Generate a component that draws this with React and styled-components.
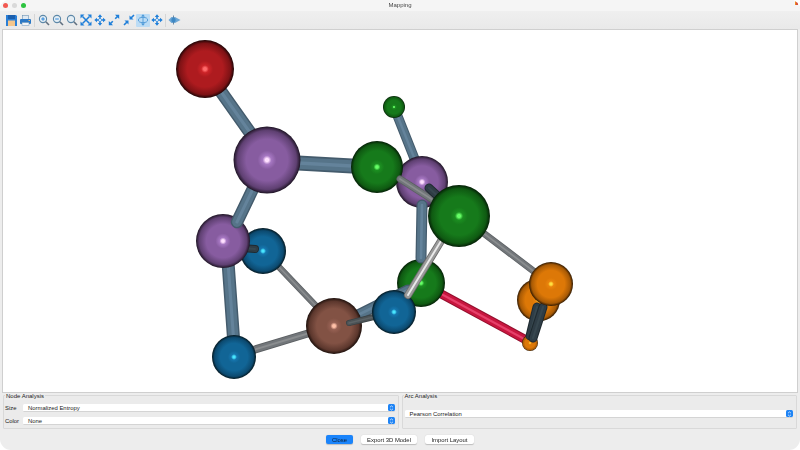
import React from "react";
import styled, { createGlobalStyle } from "styled-components";

const Global = createGlobalStyle`
  html, body { margin: 0; padding: 0; background: #fff; width: 800px; height: 450px; overflow: hidden; }
  body { font-family: "Liberation Sans", Arial, sans-serif; }
`;

const Window = styled.div`
  width: 800px; height: 450px; box-sizing: border-box;
  background: #ededed; border-radius: 9px 9px 11px 11px;
  display: flex; flex-direction: column; overflow: hidden; position: relative;
  filter: blur(0.25px);
`;
const TitleBar = styled.div`
  height: 11px; flex: none; display: flex; align-items: center; position: relative;
  padding-left: 3px; gap: 4px; background: #f5f5f5;
`;
const Light = styled.span`
  width: 5px; height: 5px; border-radius: 50%; background: ${p => p.$c};
`;
const Title = styled.div`
  position: absolute; left: 0; right: 0; top: 1px; text-align: center;
  font-size: 6px; line-height: 9px; color: #444;
`;
const Badge = styled.div`
  position: absolute; right: 2px; top: 1px; width: 3px; height: 4px;
  background: linear-gradient(90deg, #ef8a1e 50%, #d9503a 50%);
`;
const Toolbar = styled.div`
  height: 18px; flex: none; display: flex; align-items: center; padding-left: 4px;
  background: linear-gradient(#efefef, #e9e9e9);
`;
const ToolBtn = styled.div`
  width: 14.1px; height: 13px; flex: none; display: flex; align-items: center; justify-content: center;
  background: ${p => (p.$active ? "#bcdcf5" : "transparent")}; border-radius: 1px;
`;
const Sep = styled.div`
  width: 1px; height: 13px; flex: none; margin: 0 ${p => p.$m}px; background: #d6d6d6;
`;
const Stage = styled.svg`
  display: block; flex: none; width: 794px; height: 362px; margin: 1px 3px 0;
  background: #fff; outline: 1px solid #cfcfcf;
`;
const Panels = styled.div`
  flex: none; display: flex; gap: 3px; margin: 3px 3px 0; height: 34px;
`;
const Group = styled.div`
  flex: 1 1 0; box-sizing: border-box; position: relative; border: 1px solid #d9d9d9;
  background: #ebebeb; border-radius: 1px; padding: 8px 3px 0 1px;
  display: flex; flex-direction: column; gap: 5px;
  justify-content: ${p => (p.$center ? "center" : "flex-start")};
  ${p => p.$center && "padding-top: 4px;"}
`;
const GroupTitle = styled.div`
  position: absolute; left: 1px; top: -3px; padding: 0 1px; font-size: 6px; line-height: 7px;
  color: #222; background: #ededed;
`;
const FieldRow = styled.div`
  display: flex; align-items: center; height: 8px; font-size: 5.9px; color: #222;
`;
const FieldLabel = styled.div`
  width: 18px; flex: none; white-space: nowrap;
`;
const Combo = styled.div`
  flex: 1; height: 8px; box-sizing: border-box; background: #fff; border-radius: 1.5px;
  border-bottom: 1px solid #d4d4d4; padding-left: 5px; margin-left: ${p => p.$ml || 0}px;
  display: flex; align-items: center; justify-content: space-between; font-size: 5.9px; color: #222;
`;
const Stepper = styled.div`
  width: 7px; height: 7.5px; flex: none; border-radius: 1.5px; background: #1f84f5;
  display: flex; align-items: center; justify-content: center;
`;
const Buttons = styled.div`
  flex: 1; display: flex; justify-content: center; align-items: center; gap: 8px;
`;
const Button = styled.div`
  height: 9px; width: ${p => p.$w}px; display: flex; align-items: center; justify-content: center;
  border-radius: 2px; font-size: 5.9px; background: ${p => (p.$primary ? "#1a84fb" : "#fff")};
  color: ${p => (p.$primary ? "#0c1d33" : "#222")};
  box-shadow: 0 0.5px 1px rgba(0,0,0,.2);
`;

const B = "#1f7fd9";
const Mag = ({ sign }) => (
  <svg width="12" height="12" viewBox="0 0 12 12" fill="none">
    <circle cx="5" cy="5" r="3.6" stroke="#5d88a8" strokeWidth="1.1" fill="#e4eef5" />
    <path d="M7.8 7.8 11 11" stroke="#607080" strokeWidth="1.6" />
    {sign !== "none" && <path d="M3.2 5h3.6" stroke={B} strokeWidth=".9" />}
    {sign === "plus" && <path d="M5 3.2v3.6" stroke={B} strokeWidth=".9" />}
  </svg>
);
const Save = () => (
  <svg width="13" height="13" viewBox="0 0 13 13">
    <path d="M1 1h10l1 1v10H1z" fill="#2a7fd6" />
    <rect x="3" y="1" width="7" height="4" fill="#1b5fae" />
    <rect x="3" y="6.5" width="7" height="5.5" fill="#f4c68c" />
  </svg>
);
const Print = () => (
  <svg width="13" height="13" viewBox="0 0 13 13">
    <rect x="3.5" y="1.5" width="6" height="4" fill="#dfe9f2" stroke="#6b93b5" strokeWidth=".6" />
    <rect x="1" y="5" width="11" height="5" rx="1" fill="#2b78c5" />
    <rect x="3" y="8.5" width="7" height="3" fill="#f1f4f7" stroke="#6b93b5" strokeWidth=".5" />
    <rect x="9.5" y="6" width="1.5" height="1" fill="#f3b45c" />
  </svg>
);
const Expand = () => (
  <svg width="12" height="12" viewBox="0 0 12 12">
    <path d="M2.5 2.5 9.5 9.5M9.5 2.5 2.5 9.5" stroke={B} strokeWidth="1.5" />
    <path d="M.5.5h4L.5 4.5zM11.5.5v4L7.5.5zM.5 11.5v-4l4 4zM11.5 11.5h-4l4-4z" fill={B} />
  </svg>
);
const Move = () => (
  <svg width="12" height="12" viewBox="0 0 12 12">
    <path d="M6 2v8M2 6h8" stroke={B} strokeWidth="1.5" />
    <path d="M6 .3 8.2 3H3.8zM6 11.7 3.8 9h4.4zM.3 6 3 3.8v4.4zM11.7 6 9 8.2V3.8z" fill={B} />
    <circle cx="6" cy="6" r="1.5" fill="#fff" stroke={B} strokeWidth=".6" />
  </svg>
);
const Diag = () => (
  <svg width="12" height="12" viewBox="0 0 12 12">
    <path d="M2 10 4.8 7.2M10 2 7.2 4.8" stroke={B} strokeWidth="1.6" />
    <path d="M.8 11.2V7l4.2 4.2zM11.2.8V5L7 .8z" fill={B} />
  </svg>
);
const Shrink = () => (
  <svg width="12" height="12" viewBox="0 0 12 12">
    <path d="M1 11 4 8M11 1 8 4" stroke={B} strokeWidth="1.6" />
    <path d="M5.5 6.5v4l-4-4zM6.5 5.5v-4l4 4z" fill={B} />
  </svg>
);
const Orbit = () => (
  <svg width="12" height="12" viewBox="0 0 12 12" fill="none">
    <ellipse cx="6" cy="6" rx="4.6" ry="2.6" stroke="#4f9ad8" strokeWidth=".9" />
    <path d="M6 1.5v9" stroke="#4f9ad8" strokeWidth=".9" />
    <path d="M6 .3 8 2.6H4zM6 11.7 4 9.4h4z" fill="#4f9ad8" />
  </svg>
);
const View = () => (
  <svg width="13" height="12" viewBox="0 0 13 12">
    <path d="M.5 6 3.5 3h3.5L12.5 6 7 9H3.5z" fill="#6da7d6" />
    <path d="M5.5 1.5V10.5" stroke="#5d7f9c" strokeWidth=".9" />
    <circle cx="5.5" cy="6" r="2.2" fill="#3d88c4" />
  </svg>
);
const StepIcon = () => (
  <svg width="5" height="6" viewBox="0 0 5 6" fill="none">
    <path d="M1 2.2 2.5 .9 4 2.2M1 3.8l1.5 1.3L4 3.8" stroke="#fff" strokeWidth=".7" />
  </svg>
);

const PAL = {
  red: ["#ff6b6b", "#cc2428", "#ae1b1f", "#7e1215", "#1e0405"],
  purple: ["#ffe0ff", "#a677c2", "#875ca0", "#5f4072", "#1e1424"],
  green: ["#66ff66", "#1c8f21", "#167a1b", "#0f5a12", "#041f06"],
  blue: ["#48e6ff", "#1676ae", "#116596", "#0c4a70", "#03171f"],
  brown: ["#ffc0a8", "#966053", "#825244", "#5c372d", "#1c0f0b"],
  orange: ["#ffe040", "#ea840c", "#dd7807", "#a85a05", "#2e1801"],
};
const Grad = ({ id, c }) => (
  <radialGradient id={id}>
    <stop offset="0" stopColor={c[0]} />
    <stop offset="0.05" stopColor={c[0]} />
    <stop offset="0.13" stopColor={c[1]} />
    <stop offset="0.28" stopColor={c[2]} />
    <stop offset="0.62" stopColor={c[2]} />
    <stop offset="0.88" stopColor={c[3]} />
    <stop offset="1" stopColor={c[4]} />
  </radialGradient>
);
const Sphere = ({ x, y, r, c }) => <circle cx={x} cy={y} r={r} fill={`url(#g-${c})`} />;

const BOND = {
  slate: ["#445b6c", "#567489", "#64839b"],
  grey: ["#5c6063", "#72767a", "#8a8d8f"],
  steel: ["#3a4144", "#4c5356", "#5c6366"],
  dark: ["#1f2a30", "#2f3d46", "#37474f"],
  pale: ["#6a6a6a", "#9a9a9a", "#eaeaea"],
  crimson: ["#94102e", "#c8163f", "#e6406a"],
};
const Bond = ({ a, b, w, k }) => {
  const c = BOND[k];
  const p = { x1: a[0], y1: a[1], x2: b[0], y2: b[1], strokeLinecap: "round" };
  return (
    <g>
      <line {...p} stroke={c[0]} strokeWidth={w} />
      <line {...p} stroke={c[1]} strokeWidth={w * 0.78} />
      <line {...p} stroke={c[2]} strokeWidth={w * 0.24} />
    </g>
  );
};

const Scene = () => (
  <Stage viewBox="3 30 794 362">
    <defs>{Object.entries(PAL).map(([k, c]) => <Grad key={k} id={`g-${k}`} c={c} />)}</defs>
    <Bond a={[228, 262]} b={[234, 345]} w={13} k="slate" />
    <Bond a={[278, 266]} b={[318, 308]} w={6.5} k="grey" />
    <Bond a={[250, 351]} b={[316, 331]} w={8} k="grey" />
    <Sphere x={263} y={251} r={23} c="blue" />
    <Sphere x={234} y={357} r={22} c="blue" />
    <Bond a={[242, 248]} b={[255, 249]} w={8} k="dark" />
    <Sphere x={223} y={241} r={27} c="purple" />
    <Bond a={[262, 170]} b={[237, 222]} w={12.5} k="slate" />
    <Bond a={[205, 69]} b={[251, 134]} w={13} k="slate" />
    <Bond a={[280, 162]} b={[370, 167]} w={15} k="slate" />
    <Sphere x={205} y={69} r={29} c="red" />
    <Sphere x={267} y={160} r={33.5} c="purple" />
    <Bond a={[421, 283]} b={[528, 341]} w={9} k="crimson" />
    <Sphere x={421} y={283} r={24} c="green" />
    <Bond a={[352, 318]} b={[408, 290]} w={11} k="slate" />
    <Sphere x={334} y={326} r={28} c="brown" />
    <Bond a={[349, 323]} b={[378, 316]} w={6} k="steel" />
    <Bond a={[394, 107]} b={[417, 165]} w={10} k="slate" />
    <Sphere x={394} y={107} r={11} c="green" />
    <Sphere x={422} y={182} r={26} c="purple" />
    <Sphere x={377} y={167} r={26} c="green" />
    <Bond a={[422, 205]} b={[421, 258]} w={11} k="slate" />
    <Bond a={[400, 179]} b={[436, 202]} w={7} k="grey" />
    <Bond a={[429, 188]} b={[442, 200]} w={9} k="dark" />
    <Bond a={[482, 232]} b={[540, 276]} w={7} k="grey" />
    <Sphere x={394} y={312} r={22} c="blue" />
    <Bond a={[441, 241]} b={[408, 295]} w={8} k="pale" />
    <Sphere x={459} y={216} r={31} c="green" />
    <Sphere x={538.5} y={300} r={21.5} c="orange" />
    <Sphere x={530} y={343} r={8} c="orange" />
    <Bond a={[537, 307]} b={[530, 336]} w={9} k="dark" />
    <Bond a={[543, 307]} b={[533, 338]} w={9} k="dark" />
    <Sphere x={551} y={284} r={22} c="orange" />
  </Stage>
);

export default function App() {
  return (
    <Window>
      <Global />
      <TitleBar>
        <Light $c="#f25a52" />
        <Light $c="#d9d9d9" />
        <Light $c="#2dc33f" />
        <Title>Mapping</Title>
        <Badge />
      </TitleBar>
      <Toolbar>
        <ToolBtn><Save /></ToolBtn>
        <ToolBtn><Print /></ToolBtn>
        <Sep $m={1.9} />
        <ToolBtn><Mag sign="plus" /></ToolBtn>
        <ToolBtn><Mag sign="minus" /></ToolBtn>
        <ToolBtn><Mag sign="none" /></ToolBtn>
        <ToolBtn><Expand /></ToolBtn>
        <ToolBtn><Move /></ToolBtn>
        <ToolBtn><Diag /></ToolBtn>
        <ToolBtn><Shrink /></ToolBtn>
        <ToolBtn $active><Orbit /></ToolBtn>
        <ToolBtn><Move /></ToolBtn>
        <Sep $m={1.4} />
        <ToolBtn><View /></ToolBtn>
      </Toolbar>
      <Scene />
      <Panels>
        <Group>
          <GroupTitle>Node Analysis</GroupTitle>
          <FieldRow>
            <FieldLabel>Size</FieldLabel>
            <Combo>Normalized Entropy<Stepper><StepIcon /></Stepper></Combo>
          </FieldRow>
          <FieldRow>
            <FieldLabel>Color</FieldLabel>
            <Combo>None<Stepper><StepIcon /></Stepper></Combo>
          </FieldRow>
        </Group>
        <Group $center>
          <GroupTitle>Arc Analysis</GroupTitle>
          <FieldRow>
            <Combo $ml={1}>Pearson Correlation<Stepper><StepIcon /></Stepper></Combo>
          </FieldRow>
        </Group>
      </Panels>
      <Buttons>
        <Button $primary $w={27}>Close</Button>
        <Button $w={56}>Export 3D Model</Button>
        <Button $w={49}>Import Layout</Button>
      </Buttons>
    </Window>
  );
}
